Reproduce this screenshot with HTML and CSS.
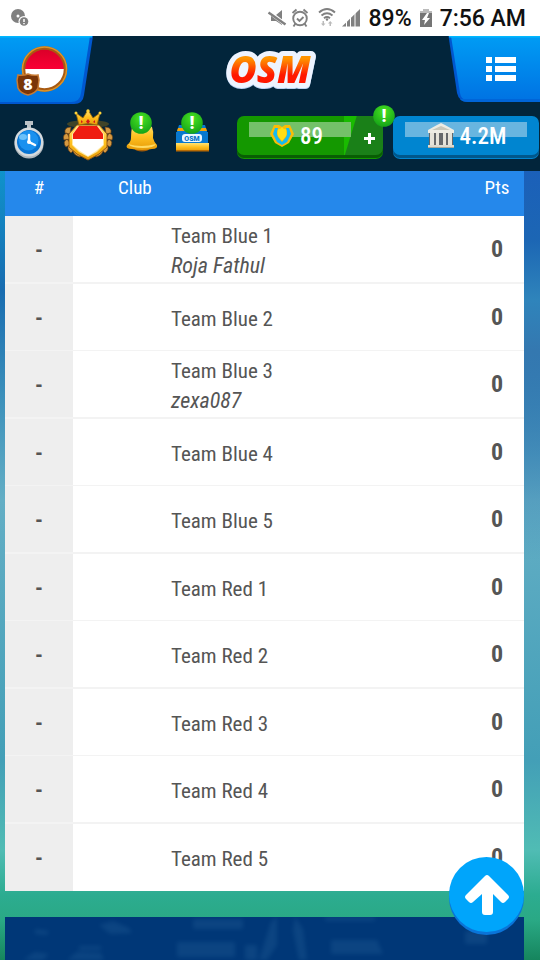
FILE: index.html
```html
<!DOCTYPE html>
<html lang="en">
<head>
<meta charset="utf-8">
<meta name="viewport" content="width=device-width, initial-scale=1">
<title>OSM - League table</title>
<link rel="stylesheet" href="styles.css">
</head>
<body>
<div class="status">
  <svg class="status-alert" width="20" height="20" viewBox="10 9 20 20" aria-hidden="true">
    <circle cx="18" cy="17" r="7" fill="#808080"/><circle cx="18" cy="17" r="1.500" fill="#fff"/>
    <circle cx="24" cy="22.500" r="5.500" fill="#fff"/><circle cx="24" cy="22.500" r="4.300" fill="#808080"/>
    <path d="M24 20v3M24 24v1.300" stroke="#fff" stroke-width="1.500"/>
  </svg>
  <svg width="96" height="24" viewBox="265 6 96 24" aria-hidden="true">
    <g fill="#808080">
      <path d="M271 15h5l6-5v15l-6-4h-5z"/>
      <path d="M269 12l16 12" stroke="#fff" stroke-width="4"/><path d="M268.500 12.500l17 12" stroke="#808080" stroke-width="2.400"/>
      <path d="M342 26.500L360 9V26.500z"/>
    </g>
    <path d="M346.500 9v18M350.500 9v18M355 9v18" stroke="#fff" stroke-width="1"/>
    <g fill="none" stroke="#808080" stroke-width="1.900">
      <circle cx="300" cy="18.500" r="6.800"/><path d="M297 18.500l2.500 2.500 4-4M292.500 13l4-3.500M303.500 9.500l4 3.500M295.500 23.500l-2 3M304.500 23.500l2 3"/>
      <path d="M319 12.500q8-7 16 0M321.500 15.500q5.500-4.500 11 0M324 18.200q3-2.400 6 0"/>
    </g>
    <circle cx="327" cy="19.500" r="1.200" fill="#808080"/>
    <path d="M322.500 21h1.500v2.500h1.500l-2.300 2.500-2.200-2.500h1.500zM329.500 26h1.500v-2.500h1.500l-2.300-2.500-2.200 2.500h1.500z" fill="#bbb"/>
  </svg>
  <span>89%</span>
  <svg class="battery" width="12" height="18" viewBox="0 0 12 18" aria-hidden="true"><path d="M3 0h6v2h3v2H0V2h3z" fill="#bbb"/><path d="M0 4h12v14H0z" fill="#757575"/><path d="M7 4L2 11h3l-1 5 6-7H7l2-5z" fill="#fff"/></svg>
  <span>7:56 AM</span>
</div>

<header class="header">
  <div class="bar">
    <a class="tab" href="#profile" aria-label="Manager profile, level 8">
      <svg width="94" height="68" viewBox="0 36 94 68">
        <defs>
          <linearGradient id="tab" x1="0" y1="0" x2="0" y2="1"><stop offset="0" stop-color="#009cf4"/><stop offset="1" stop-color="#0073e3"/></linearGradient>
          <linearGradient id="red" x1="0" y1="0" x2="0" y2="1"><stop offset="0" stop-color="#d80028"/><stop offset="1" stop-color="#fa0034"/></linearGradient>
          <linearGradient id="gold" x1="0" y1="0" x2="0" y2="1"><stop offset="0" stop-color="#ffe477"/><stop offset=".5" stop-color="#ffc01f"/><stop offset="1" stop-color="#e59a08"/></linearGradient>
          <radialGradient id="green" cx=".5" cy=".3" r=".7"><stop offset="0" stop-color="#48e321"/><stop offset="1" stop-color="#15a318"/></radialGradient>
        </defs>
        <path d="M0 36h93l-9 59q-1 9-10 9H0z" fill="#0057cf"/>
        <path d="M0 36h90l-9 57q-1 9-10 9H0z" fill="url(#tab)"/><path d="M0 36h92v1.500H0z" fill="#00b8ff"/>
        <circle cx="44.500" cy="69" r="21" fill="#fff"/>
        <path d="M23.500 69a21 21 0 0 1 42 0z" fill="url(#red)"/>
        <circle cx="44.500" cy="69" r="21" fill="none" stroke="#a85a12" stroke-width="3.500"/>
        <circle cx="44.500" cy="69" r="22" fill="none" stroke="#dc9428" stroke-width="1.500"/>
        <path d="M18 75q5 1 10-1 5 2 10 1l1 5-1 8q-2 5-10 7-8-2-10-7l-1-8z" fill="#7a3608" stroke="#c77a32" stroke-width="1.500"/>
        <text class="level" x="28" y="90">8</text>
      </svg>
    </a>
    <a class="logo" href="#home" aria-label="OSM home">
      <svg width="120" height="60" viewBox="211 38 120 60">
        <defs><linearGradient id="fire" gradientUnits="userSpaceOnUse" x1="0" y1="56" x2="0" y2="83"><stop offset=".1" stop-color="#ff9400"/><stop offset=".7" stop-color="#ff1800"/></linearGradient></defs>
        <text class="logo-text" x="270" y="83">OSM</text>
      </svg>
    </a>
    <button class="tab" aria-label="Menu">
      <svg width="92" height="66" viewBox="448 36 92 66">
        <path d="M448.500 36H540v66h-72q-9 0-11-9z" fill="#0057cf"/>
        <path d="M451 36h89v64h-73q-6 0-7-7z" fill="url(#tab)"/><path d="M449 36h91v1.500h-91z" fill="#00b8ff"/>
        <path d="M460 99q2 3 8 3h72v-3z" fill="#0065d8"/>
        <path d="M486 57h6v6h-6zM486 66h6v6h-6zM486 75h6v6h-6zM495 57h21v6h-21zM495 66h21v6h-21zM495 75h21v6h-21z" fill="#fff"/>
      </svg>
    </button>
  </div>
  <div class="tools">
    <button aria-label="Timers">
      <svg width="56" height="60" viewBox="0 106 56 60">
        <path d="M25 121h8v4h-2v5h-4v-5h-2z" fill="#bcc2c6"/>
        <circle cx="29" cy="144" r="14.500" fill="#aeb6bb"/><circle cx="29" cy="142" r="14.500" fill="#d5dadd"/>
        <circle cx="29" cy="142" r="12" fill="#0874d2"/><circle cx="28.500" cy="140.500" r="10" fill="#1a91ef"/><ellipse cx="23" cy="137" rx="4" ry="3" fill="#6cc1fa"/>
        <path d="M29 135v7l6 3" fill="none" stroke="#fff" stroke-width="2.500" stroke-linecap="round" stroke-linejoin="round"/><circle cx="29" cy="142" r="2" fill="#fff"/>
      </svg>
    </button>
    <button aria-label="Crest">
      <svg width="60" height="60" viewBox="56 106 60 60">
        <ellipse cx="88" cy="124" rx="21" ry="4" fill="#6b5a1c" opacity=".6"/>
        <g fill="#d69a42" stroke="#6f4213" stroke-width=".7">
          <path d="M71 127q-7 0-6 6l5 1zM67 133q-5 2-3 7l6-1zM67 139q-5 3-1 8l5-3zM69 145q-3 4 2 8l4-4zM73 150q0 5 7 7l2-5z"/>
          <path d="M105 127q7 0 6 6l-5 1zM109 133q5 2 3 7l-6-1zM109 139q5 3 1 8l-5-3zM107 145q3 4-2 8l-4-4zM103 150q0 5-7 7l-2-5z"/>
        </g>
        <path d="M77 125h22l8 9v13l-8 7-11 6-11-6-8-7v-13z" fill="url(#gold)" stroke="#9a5b10"/>
        <path d="M78 126h20l6 8v11l-7 7-9 5-9-5-7-7v-11z" fill="#ffe9a0"/>
        <path d="M79 126h18l6 8v6H73v-6z" fill="#ef1c10"/><path d="M73 139h30v6l-7 6-8 5-8-5-7-6z" fill="#fff"/>
        <path d="M79 125l-3-12 7 5 5-8 5 8 7-5-3 12q-9-3-18 0z" fill="url(#gold)" stroke="#9b6908" stroke-width=".8"/>
        <g fill="#ffd339"><circle cx="76" cy="113" r="1.500"/><circle cx="88" cy="111" r="1.700"/><circle cx="100" cy="113" r="1.500"/></g>
        <path d="M88 119l2 2.500-2 2.500-2-2.500zM81 120l2 2-2 1zM95 120l-2 2 2 1z" fill="#d51719"/>
      </svg>
    </button>
    <button aria-label="Notifications">
      <svg width="54" height="60" viewBox="116 106 54 60">
        <ellipse cx="142" cy="149" rx="7" ry="2.500" fill="#a15b08"/>
        <path d="M132 127q10-7 20 0 2 5 1 11 1 4 4 7 1 4-5 4-10 2-20 0-7 0-5-4 4-3 4-7 0-6 1-11z" fill="url(#gold)"/>
        <path d="M128 144q13 4 28 0-2 4-13 4-12 0-15-4z" fill="#ffda61"/>
        <circle cx="141" cy="123" r="10.800" fill="url(#green)"/><text class="bang" x="141" y="129">!</text>
      </svg>
    </button>
    <button aria-label="Store">
      <svg width="54" height="60" viewBox="170 106 54 60">
        <path d="M179 125h26l3 10H176z" fill="#087bd1"/><path d="M178 128h28l1 3h-30z" fill="#f8a308"/>
        <path d="M176 132h32v11h-32z" fill="#0878ce"/><path d="M176 143h33v8h-33z" fill="url(#gold)"/><path d="M176 150h33v1.500h-33z" fill="#b86b04"/>
        <rect x="182" y="134" width="20" height="8" rx="3" fill="#eaf7ff"/><text class="box-text" x="192" y="141">OSM</text>
        <circle cx="192" cy="123" r="10.800" fill="url(#green)"/><text class="bang" x="192" y="129">!</text>
      </svg>
    </button>
    <div class="wallet">
      <button class="pill coins">
        <svg width="24" height="24" viewBox="0 0 24 24" aria-hidden="true">
          <path d="M4 1h5l3 2 3-2h5l4 9-5 9-7 4-7-4-5-9z" fill="#f9bd06"/>
          <path d="M5 4h3q-2 6 0 9l4 5 4-5q2-3 0-9h3l2 6-4 8-5 3-5-3-4-8z" fill="#17baf0"/>
          <path d="M8 5q2 1 4-2 2 3 4 2 1 5 0 7l-4 5-4-5Q7 9 8 5z" fill="#ffdd13"/>
        </svg>
        <span>89</span>
        <svg class="plus" width="11" height="11" viewBox="0 0 11 11" aria-hidden="true"><path d="M4 0h3v4h4v3H7v4H4V7H0V4h4z" fill="#fff"/></svg>
        <svg class="alert" width="22" height="24" viewBox="130 111 22 24" aria-hidden="true"><circle cx="141" cy="123" r="10.800" fill="url(#green)"/><text class="bang" x="141" y="129">!</text></svg>
      </button>
      <button class="pill cash">
        <svg width="28" height="26" viewBox="0 0 28 26" aria-hidden="true">
          <path d="M2 8h24v15H2z" fill="#65686a"/>
          <path d="M1 7l9-5 4-2 4 2 9 5v3H1z" fill="#edece3"/><path d="M5 7l9-4 9 4z" fill="#c9c7b9"/>
          <path d="M3 10h4v12H3zM9 10h3v12H9zM16 10h3v12h-3zM21 10h4v12h-4z" fill="#e5e3d9"/>
          <path d="M1 22h26v3H1z" fill="#dddace"/><path d="M1 24h26v1H1z" fill="#aaa89c"/>
        </svg>
        <span>4.2M</span>
      </button>
    </div>
  </div>
</header>

<main class="page">
  <table class="league">
    <thead><tr><th class="rank">#</th><th class="club-head">Club</th><th class="pts">Pts</th></tr></thead>
    <tbody>
      <tr><td class="rank">-</td><td class="club">Team Blue 1<em>Roja Fathul</em></td><td class="pts">0</td></tr>
      <tr><td class="rank">-</td><td class="club">Team Blue 2</td><td class="pts">0</td></tr>
      <tr><td class="rank">-</td><td class="club">Team Blue 3<em>zexa087</em></td><td class="pts">0</td></tr>
      <tr><td class="rank">-</td><td class="club">Team Blue 4</td><td class="pts">0</td></tr>
      <tr><td class="rank">-</td><td class="club">Team Blue 5</td><td class="pts">0</td></tr>
      <tr><td class="rank">-</td><td class="club">Team Red 1</td><td class="pts">0</td></tr>
      <tr><td class="rank">-</td><td class="club">Team Red 2</td><td class="pts">0</td></tr>
      <tr><td class="rank">-</td><td class="club">Team Red 3</td><td class="pts">0</td></tr>
      <tr><td class="rank">-</td><td class="club">Team Red 4</td><td class="pts">0</td></tr>
      <tr><td class="rank">-</td><td class="club">Team Red 5</td><td class="pts">0</td></tr>
    </tbody>
  </table>
  <section class="panel" aria-hidden="true">
    <svg width="519" height="43" viewBox="0 0 519 43">
      <defs><filter id="haze"><feGaussianBlur stdDeviation="2"/></filter></defs>
      <g fill="#2f6aa0" opacity=".26" filter="url(#haze)">
        <path d="M94 8l14-4 16 7 3 5-22 1zM30 12l14 2-2 4-12-1zM18 43l12-8 14 2-6 6zM62 43l10-8 24 1 3 7zM74 29h22v4H74z"/>
        <path d="M188 2h50v10h-50zM172 25h58v15h-58zM240 28h12v15h-12zM266 5l6-5v28l-10 15h-8zM290 0l8 12 4 31h-8l-6-30zM326 23h46l6 14h-52zM320 0h50v4h-50zM460 14h22v13h-22z"/>
      </g>
    </svg>
  </section>
</main>
<button class="to-top" aria-label="Back to top">
  <svg width="44" height="42" viewBox="0 0 44 42"><path d="M17 38V20l-9 8q-2 2-4 0l-3-3q-2-2 0-4L20 2q2-2 4 0l19 19q2 2 0 4l-3 3q-2 2-4 0l-8-8v18q0 3-3 3h-5q-3 0-3-3z" fill="#fff"/></svg>
</button>
</body>
</html>
```
FILE: styles.css
```css
* { box-sizing: border-box; }

body {
  margin: 0;
  min-height: 100vh;
  display: flex;
  flex-direction: column;
  font-family: "Roboto Condensed", "Liberation Sans Narrow", "Liberation Sans", sans-serif;
  color: #555;
  background:
    linear-gradient(#1b60b9 171px, #1c66b4 240px, #2f84bb 300px, #3478b0 350px, rgba(60, 130, 180, 0) 560px) right top / 16px 100% no-repeat,
    linear-gradient(#0f93cb 171px, #186cb0 290px, #3d91bb 400px, #63aec5 500px, #439fb7 760px, #50bcb4 850px, #2cac90 895px, #2aa985 920px, #16855d 960px);
}

button {
  padding: 0;
  border: 0;
  background: none;
  color: inherit;
  font: inherit;
  cursor: pointer;
}

svg { display: block; }

/* Device status line */
.status {
  display: flex;
  align-items: center;
  gap: 8px;
  height: 36px;
  padding: 0 14px 0 10px;
  background: #fff;
  color: #111;
  font: 500 23px/36px Roboto, sans-serif;
}
.status span { padding-top: 2px; }
.status-alert { margin-right: auto; }

/* Site header */
.header { background: #02253b; }
.bar {
  display: flex;
  justify-content: space-between;
  align-items: flex-start;
}
.logo { padding-top: 2px; }
.tools {
  display: flex;
  align-items: center;
  height: 67px;
  padding: 0 1px 4px 0;
}
.level, .logo-text {
  font-family: "Open Sans", sans-serif;
  font-weight: 800;
  text-anchor: middle;
  fill: #fff;
}
.level { font-size: 16px; }
.bang, .box-text {
  font-family: Roboto, sans-serif;
  font-weight: 900;
  text-anchor: middle;
  fill: #fff;
}
.bang { font-size: 18px; }
.box-text { font-size: 7px; fill: #0874c7; }
.logo-text {
  font-size: 37px;
  font-style: italic;
  fill: url(#fire);
  stroke: #eef4ff;
  stroke-width: 10px;
  stroke-linejoin: round;
  paint-order: stroke;
  filter: drop-shadow(0 1px 0 #b9d2f2);
}

.wallet {
  display: flex;
  flex: 1;
  gap: 10px;
  margin: 4px 0 0 13px;
}
.pill {
  position: relative;
  display: flex;
  flex: 1;
  align-items: center;
  height: 43px;
  padding-bottom: 4px;
  border-radius: 7px;
  color: #fff;
  font-size: 23px;
  font-weight: 500;
}
.pill span { padding-top: 2px; }
.coins {
  gap: 6px;
  padding-left: 33px;
  background:
    linear-gradient(#74c169, #74c169) 12px 6px / 102px 15px no-repeat,
    linear-gradient(90deg, #149800 107px, transparent 107px),
    linear-gradient(107deg, #19bb00 114px, #1a8018 115px);
  box-shadow: inset 0 -1px 0 #149800, inset 0 -4px 0 #095d04;
}
.cash {
  gap: 5px;
  padding-left: 34px;
  background:
    linear-gradient(#68b5e0, #68b5e0) 12px 6px / 122px 15px no-repeat,
    #0085d0;
  box-shadow: inset 0 -1px 0 #0085d0, inset 0 -4px 0 #00578b;
}
.plus { margin: 6px 8px 0 auto; }
.alert {
  position: absolute;
  top: -12px;
  right: -12px;
}

/* League table */
.page {
  display: flex;
  flex: 1;
  flex-direction: column;
  gap: 26px;
  padding: 0 16px 0 5px;
}
.league {
  width: 100%;
  border-collapse: separate;
  border-spacing: 0;
  table-layout: fixed;
  background: #fff;
}
.league th, .league td { padding: 0; }
.league th {
  height: 45px;
  padding-bottom: 11px;
  background: #2588eb;
  color: #fff;
  font-size: 19px;
  font-weight: 400;
  line-height: 24px;
}
.league .rank { width: 68px; text-align: center; }
.league .pts { width: 54px; text-align: center; }
.league .club-head { padding-left: 45px; text-align: left; }
.league td {
  height: 67px;
  border-bottom: 1px solid #f3f3f3;
  font-size: 22px;
  line-height: 29px;
}
.league tbody tr:nth-child(odd) td {
  height: 68px;
  border-bottom-width: 2px;
}
.league tbody tr:last-child td { border-bottom: 0; }
.league td.rank { padding-top: 2px; background: #eee; font-weight: 700; }
.league td.club { padding: 4px 0 0 98px; font-size: 21px; }
.league td.pts { font-size: 24px; font-weight: 700; }
.club em { display: block; font-size: 22px; }

.panel {
  flex: 1;
  min-height: 43px;
  overflow: hidden;
  background: #003777;
}

.to-top {
  position: fixed;
  right: 16px;
  bottom: 28px;
  display: grid;
  place-items: center;
  width: 75px;
  height: 75px;
  border-radius: 50%;
  background: #00a5fb;
  box-shadow: 0 3px 0 #0a74d8;
}
```
